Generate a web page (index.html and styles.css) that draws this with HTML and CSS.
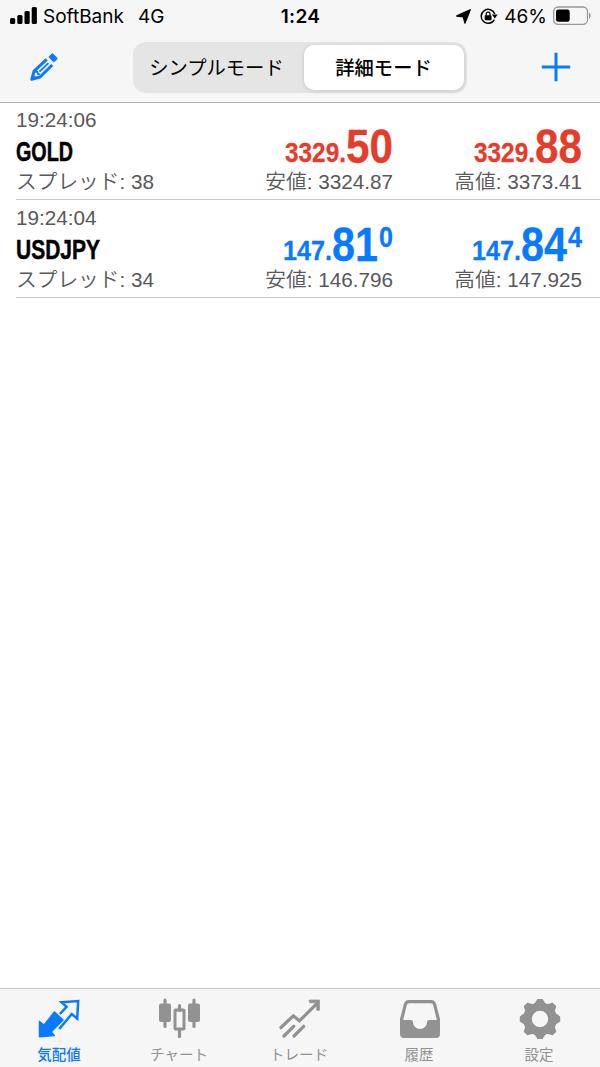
FILE: index.html
```html
<!DOCTYPE html>
<html lang="ja">
<head>
<meta charset="utf-8">
<title>気配値</title>
<link rel="stylesheet" href="styles.css">
</head>
<body>
<div class="app">
  <header class="header">
    <div class="status">
      <div class="status-left">
        <svg class="signal" width="27" height="18" viewBox="0 0 27 18"><rect x="0" y="11" width="5.2" height="6" rx="1.5"/><rect x="7.3" y="8" width="5.2" height="9" rx="1.5"/><rect x="14.5" y="4" width="5.2" height="13" rx="1.5"/><rect x="21.7" y="0" width="5.2" height="17" rx="1.5"/></svg>
        <span class="carrier">SoftBank</span><span class="network">4G</span>
      </div>
      <div class="clock">1:24</div>
      <div class="status-right">
        <svg width="15" height="15" viewBox="0 0 15 15"><path d="M14.2.8 9 14 7.3 7.8 .8 7Z" stroke="#000" stroke-width="1.4" stroke-linejoin="round"/></svg>
        <svg class="lock" width="18" height="17" viewBox="0 0 18 17"><path d="M14.4 11.6A7 7 0 1 1 14.8 6" fill="none" stroke="#000" stroke-width="1.5"/><path d="M11.8 6.6h5.8l-2.7 4z"/><rect x="4.7" y="7.2" width="6.8" height="5" rx=".7"/><path d="M6.2 7.7V6a1.9 1.9 0 0 1 3.8 0v1.7" fill="none" stroke="#000" stroke-width="1.2"/></svg>
        <span class="percent">46%</span>
        <svg class="battery" width="38" height="20" viewBox="0 0 38 20"><rect x=".7" y="1" width="33.8" height="17.3" rx="4.5" fill="none" stroke="#999" stroke-width="1.3"/><rect x="3" y="3.5" width="13.7" height="12.3" rx="2.3"/><path d="M36 6.6c2.2 1.3 2.2 4.9 0 6.2z" fill="#999"/></svg>
      </div>
    </div>
    <div class="toolbar">
      <svg class="pencil" width="28" height="28" viewBox="0 0 28 28"><path d="M18.4 4 21.8.6Q22.5 0 23.2.7L27.3 4.8Q28 5.5 27.4 6.1L23.8 9.5Z"/><path d="M16.7 6.4 4.1 18.2 1.8 26.3 10 24 22.2 12" fill="none" stroke="#087aff" stroke-width="3" stroke-linejoin="round"/><path d="M18.4 10.2 9.5 18.6M4.5 18.5 7.3 18.9 8 21 9.8 21.4" fill="none" stroke="#087aff" stroke-width="1.8"/><path d="m1.8 26.3 1.3-5 3.7 3.6z"/></svg>
      <div class="segments"><div class="segment">シンプルモード</div><div class="segment selected">詳細モード</div></div>
      <svg class="plus" width="30" height="30" viewBox="0 0 30 30"><path d="M15 .8v28.4M.8 15h28.4" stroke="#087aff" stroke-width="3"/></svg>
    </div>
  </header>
  <main class="quotes">
    <section class="quote down">
      <div class="cell info">
        <div class="label">19:24:06</div>
        <svg class="symbol" width="120" height="33"><text x="0" y="25" textLength="57" lengthAdjust="spacingAndGlyphs">GOLD</text></svg>
        <div class="label">スプレッド: 38</div>
      </div>
      <div class="cell">
        <svg class="price" width="120" height="46"><text class="small" x="12" y="38.5" textLength="61" lengthAdjust="spacingAndGlyphs">3329.</text><text class="big" x="73" y="40" textLength="47" lengthAdjust="spacingAndGlyphs">50</text></svg>
        <div class="label">安値: 3324.87</div>
      </div>
      <div class="cell">
        <svg class="price" width="120" height="46"><text class="small" x="12" y="38.5" textLength="61" lengthAdjust="spacingAndGlyphs">3329.</text><text class="big" x="73" y="40" textLength="47" lengthAdjust="spacingAndGlyphs">88</text></svg>
        <div class="label">高値: 3373.41</div>
      </div>
    </section>
    <section class="quote up">
      <div class="cell info">
        <div class="label">19:24:04</div>
        <svg class="symbol" width="120" height="33"><text x="0" y="25" textLength="84" lengthAdjust="spacingAndGlyphs">USDJPY</text></svg>
        <div class="label">スプレッド: 34</div>
      </div>
      <div class="cell">
        <svg class="price" width="120" height="46"><text class="small" x="10" y="38.5" textLength="49" lengthAdjust="spacingAndGlyphs">147.</text><text class="big" x="59" y="39.5" textLength="46" lengthAdjust="spacingAndGlyphs">81</text><text class="small sup" x="106" y="26" textLength="14" lengthAdjust="spacingAndGlyphs">0</text></svg>
        <div class="label">安値: 146.796</div>
      </div>
      <div class="cell">
        <svg class="price" width="120" height="46"><text class="small" x="10" y="38.5" textLength="49" lengthAdjust="spacingAndGlyphs">147.</text><text class="big" x="59" y="39.5" textLength="46" lengthAdjust="spacingAndGlyphs">84</text><text class="small sup" x="106" y="26" textLength="14" lengthAdjust="spacingAndGlyphs">4</text></svg>
        <div class="label">高値: 147.925</div>
      </div>
    </section>
  </main>
  <nav class="tabs">
    <div class="tab active">
      <svg width="42" height="40" viewBox="0 0 42 40"><path d="M.5 22.5 5 26.2 15.5 13 24 21 12 33 15.3 36.4.5 37.8Z" stroke="#087aff" stroke-width="1.5" stroke-linejoin="round"/><path d="m20.8 15 6.8-7.2-5.1-4.5 16.7-1.3-1 17.6-5.4-4.6-12.6 15" fill="none" stroke="#087aff" stroke-width="2.5"/></svg>
      <span>気配値</span>
    </div>
    <div class="tab">
      <svg width="42" height="40" viewBox="0 0 42 40"><rect x="0" y="4.5" width="12" height="18.5" rx="2"/><rect x="29" y="4.5" width="12" height="18.5" rx="2"/><rect x="16" y="11" width="9" height="19" rx=".5" fill="none" stroke="#929292" stroke-width="3"/><path d="M6 1.2v26.2M35 1.2v26.2M20.5 6.5v5M20.5 30v7.5" fill="none" stroke="#929292" stroke-width="3.2" stroke-linecap="round"/></svg>
      <span>チャート</span>
    </div>
    <div class="tab">
      <svg width="42" height="40" viewBox="0 0 42 40"><path d="m2 28.5 12.3-11.7 6.2 5L38.5 4M5 37l9.7-9.7M15 37l9.7-9.7" fill="none" stroke="#929292" stroke-width="3.2" stroke-linecap="round"/><path d="M30.3 1H40.5V11.3H37.7V3.8H30.3Z" stroke="#929292" stroke-width=".7"/></svg>
      <span>トレード</span>
    </div>
    <div class="tab">
      <svg width="42" height="40" viewBox="0 0 42 40"><path fill-rule="evenodd" d="M10 1H32Q36 1 37.2 5L41 20V35Q41 39 37 39H5Q1 39 1 35V20L4.8 5Q6 1 10 1ZM10.2 4.3Q8.2 4.3 7.7 6.4L4.2 21H12Q14 21 14 23V23.3A7 6.7 0 0 0 28 23.3V23Q28 21 30 21H37.8L34.3 6.4Q33.8 4.3 31.8 4.3Z"/></svg>
      <span>履歴</span>
    </div>
    <div class="tab">
      <svg width="42" height="40" viewBox="0 0 42 40"><path fill-rule="evenodd" d="M19 .8H23L25.5 4.8 28.8 6 33.3 4.6 36.3 7.5 34.9 12 36.5 15.3 40.3 18V22L36.5 24.6 34.9 28 36.3 32.5 33.3 35.4 28.8 34 25.5 35.2 23 39.2H19L16.5 35.2 13.2 34 8.7 35.4 5.7 32.5 7.1 28 5.5 24.6 1.7 22V18L5.5 15.3 7.1 12 5.7 7.5 8.7 4.6 13.2 6 16.5 4.8ZM21 10.9a9.1 9.1 0 1 0 0 18.2 9.1 9.1 0 0 0 0-18.2Z" stroke="#929292" stroke-width="1.8" stroke-linejoin="round"/></svg>
      <span>設定</span>
    </div>
  </nav>
</div>
</body>
</html>
```
FILE: styles.css
```css
* { box-sizing: border-box; }
body { margin: 0; background: #fff; color: #000; font-family: "Liberation Sans", "Noto Sans CJK JP", sans-serif; }
svg { display: block; flex: none; overflow: visible; }
.app { width: 600px; height: 1067px; display: flex; flex-direction: column; }
.header { height: 103px; background: #f6f6f6; border-bottom: 1px solid #b2b2b2; }
.status { height: 32px; padding: 0 9px 0 10px; display: grid; grid-template-columns: 1fr auto 1fr; align-items: center; font: 19px/32px Inter, sans-serif; }
.status-left, .status-right { display: flex; align-items: center; }
.status-right { justify-content: flex-end; }
.status span, .clock { height: 31px; line-height: 32px; }
.carrier { margin-left: 6px; }
.network { margin-left: 14px; }
.clock { font-weight: 600; letter-spacing: .3px; }
.lock { margin-left: 9px; }
.percent { margin-left: 6px; }
.battery { margin-left: 6px; }
.toolbar { height: 70px; padding: 0 29px 0 30px; display: flex; align-items: center; justify-content: space-between; }
.pencil { fill: #087aff; }
.segments { width: 334px; height: 51px; padding: 3px; border-radius: 13px; background: #e5e5e6; display: flex; }
.segment { width: 167px; padding-right: 5px; display: flex; align-items: center; justify-content: center; font: 400 19.3px/28px "Noto Sans CJK JP", sans-serif; }
.selected { width: 160px; margin-left: 1px; padding-right: 0; border-radius: 10px; background: #fff; box-shadow: 0 1px 5px #0002; font-weight: 500; }
.quotes { flex: 1; }
.quote { height: 97px; margin-left: 16px; padding-right: 18px; border-bottom: 1px solid #c8c8c8; display: grid; grid-template-columns: 188px 189px 189px; }
.quote + .quote { height: 98px; padding-top: 1px; }
.cell { display: flex; flex-direction: column; align-items: flex-end; justify-content: flex-end; padding-bottom: 5px; }
.info { align-items: flex-start; }
.label { height: 25px; font-size: 20.7px; line-height: 25px; color: #58585a; font-weight: 350; white-space: nowrap; }
.info .label:first-child { height: 32px; line-height: 25px; }
.symbol { margin-top: -3px; }
.symbol text { font: bold 27.5px "Liberation Sans", sans-serif; stroke: #000; stroke-width: .5px; }
.price text { font: bold 28px "Liberation Sans", sans-serif; fill: currentColor; stroke: currentColor; stroke-width: .3px; }
.price .big { font-size: 48px; }
.price .sup { font-size: 29px; }
.down .price { color: #e43d2c; }
.up .price { color: #087aff; }
.tabs { height: 79px; padding-top: 10px; border-top: 1px solid #c5c5c5; background: #f6f6f6; display: grid; grid-template-columns: repeat(5, 120px); }
.tab { display: flex; flex-direction: column; align-items: center; color: #929292; fill: #929292; font: 14.5px/22px "Noto Sans CJK JP", sans-serif; }
.tab span { margin-top: 4px; padding-right: 2px; }
.active { color: #087aff; fill: #087aff; }
.active span { font-weight: 500; }
```
